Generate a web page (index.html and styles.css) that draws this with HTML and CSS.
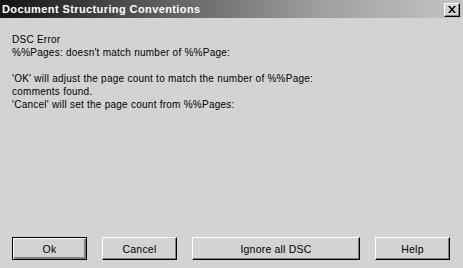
FILE: index.html
```html
<!DOCTYPE html>
<html lang="en">
<head>
    <meta charset="UTF-8">
    <title>Document Structuring Conventions</title>
    <link rel="stylesheet" href="styles.css">
</head>
<body>
    <div class="dialog">
        <div class="titlebar">
            <span class="title">Document Structuring Conventions</span>
            <button class="close" title="Close">
                <svg width="8" height="7" viewBox="0 0 8 7">
                    <path d="M0 0h2l2 2.5L6 0h2L5 3.5 8 7H6L4 4.5 2 7H0l3-3.5z" fill="#000"/>
                </svg>
            </button>
        </div>

        <div class="message">
            <p>DSC Error</p>
            <p>%%Pages: doesn't match number of %%Page:</p>
            <p class="blank">&nbsp;</p>
            <p>'OK' will adjust the page count to match the number of %%Page:</p>
            <p>comments found.</p>
            <p>'Cancel' will set the page count from %%Pages:</p>
        </div>

        <div class="buttons">
            <button class="btn default">Ok</button>
            <button class="btn">Cancel</button>
            <button class="btn wide">Ignore all DSC</button>
            <button class="btn">Help</button>
        </div>
    </div>
</body>
</html>
```

FILE: styles.css
```css
html, body {
    margin: 0;
    padding: 0;
    height: 100%;
}
body {
    background-color: #d3d3d3;
    font-family: "Liberation Sans", Arial, sans-serif;
    font-size: 10px;
    letter-spacing: 0.25px;
    color: #000;
}
.dialog {
    display: flex;
    flex-direction: column;
    height: 268px;
}
.titlebar {
    height: 18px;
    display: flex;
    align-items: center;
    justify-content: space-between;
    padding: 0 3px 0 2px;
    background: linear-gradient(to right, #141414 0%, #5e5e5e 35%, #a0a0a0 70%, #c4c4c4 100%);
}
.title {
    color: #fff;
    font-family: "Liberation Sans", Arial, sans-serif;
    font-weight: bold;
    font-size: 11px;
    letter-spacing: 0.4px;
}
.close {
    width: 16px;
    height: 14px;
    padding: 0;
    margin: 1px 0 0 0;
    display: flex;
    align-items: center;
    justify-content: center;
    background-color: #d3d3d3;
    border: 1px solid;
    border-color: #fff #000 #000 #fff;
    box-shadow: inset -1px -1px 0 #808080;
}
.message {
    flex: 1;
    padding: 15px 12px 0 12px;
}
.message p {
    margin: 0;
    line-height: 13px;
}
.buttons {
    display: flex;
    gap: 15px;
    padding: 0 12px;
    margin-bottom: 8px;
}
.btn {
    width: 75px;
    height: 23px;
    padding: 0;
    font-family: "Liberation Sans", Arial, sans-serif;
    font-size: 10.5px;
    letter-spacing: 0.2px;
    color: #000;
    background-color: #d3d3d3;
    border: 1px solid;
    border-color: #fff #000 #000 #fff;
    box-shadow: inset -1px -1px 0 #808080;
}
.btn.wide {
    width: 168px;
}
.btn.default {
    border: 1px solid #000;
    box-shadow: inset 1px 1px 0 #fff, inset -2px -2px 0 #808080;
}
```
